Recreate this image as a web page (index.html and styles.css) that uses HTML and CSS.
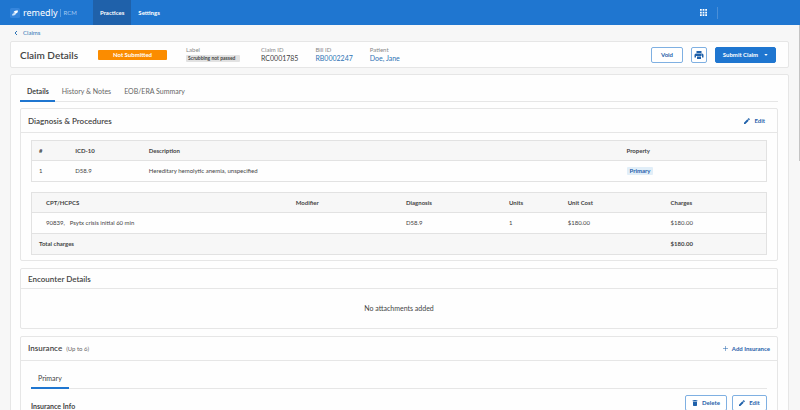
FILE: index.html
```html
<!DOCTYPE html>
<html lang="en">
<head>
    <meta charset="UTF-8">
    <meta name="viewport" content="width=device-width, initial-scale=1.0">
    <title>Claim Details - remedly RCM</title>
    <link rel="stylesheet" href="styles.css">
</head>
<body>
    <header class="topbar">
        <a class="brand" href="#">
            <svg class="brand-mark" viewBox="0 0 20 20">
                <rect width="20" height="20" rx="3" fill="#3585dc"/>
                <path d="M4 15c0-3 2-5 5-5h3c0 3-2 5-5 5z" fill="#c9e2fb"/>
                <path d="M7 9c1-3 3-4 9-4 0 4-2 6-5 6 0-1-2-2-4-2z" fill="#fff"/>
            </svg>
            <span class="brand-name">remedly</span>
            <span class="brand-sub">RCM</span>
        </a>
        <nav class="topnav">
            <a class="active" href="#">Practices</a>
            <a href="#">Settings</a>
        </nav>
        <button class="apps" aria-label="Apps">
            <svg viewBox="0 0 16 16" fill="#fff">
                <path d="M0 0h4v4H0zM6 0h4v4H6zM12 0h4v4h-4zM0 6h4v4H0zM6 6h4v4H6zM12 6h4v4h-4zM0 12h4v4H0zM6 12h4v4H6zM12 12h4v4h-4z"/>
            </svg>
        </button>
    </header>

    <main class="page">
        <a class="back" href="#">
            <svg viewBox="0 0 8 12"><path d="M6 2L2 6l4 4" fill="none" stroke="currentColor" stroke-width="2"/></svg>
            Claims
        </a>

        <!-- Claim summary -->
        <section class="card summary">
            <h1>Claim Details</h1>
            <span class="status">Not Submitted</span>
            <dl class="facts">
                <div class="fact fact-label">
                    <dt>Label</dt>
                    <dd><span class="chip">Scrubbing not passed</span></dd>
                </div>
                <div class="fact">
                    <dt>Claim ID</dt>
                    <dd>RC0001785</dd>
                </div>
                <div class="fact">
                    <dt>Bill ID</dt>
                    <dd><a href="#">RB0002247</a></dd>
                </div>
                <div class="fact">
                    <dt>Patient</dt>
                    <dd><a href="#">Doe, Jane</a></dd>
                </div>
            </dl>
            <div class="actions">
                <button class="btn btn-void">Void</button>
                <button class="btn btn-icon" aria-label="Print">
                    <svg viewBox="0 0 20 20" fill="currentColor">
                        <path d="M5 2h10v4H5zM4 7h12a3 3 0 0 1 3 3v5h-3v-3H4v3H1v-5a3 3 0 0 1 3-3zM6 13h8v5H6z"/>
                        <circle cx="15" cy="10" r="1" fill="#fff"/>
                    </svg>
                </button>
                <button class="btn btn-primary">Submit Claim
                    <svg viewBox="0 0 10 6"><path d="M0 0h10L5 6z" fill="currentColor"/></svg>
                </button>
            </div>
        </section>

        <section class="card content">
            <nav class="tabs">
                <a class="active" href="#">Details</a>
                <a href="#">History &amp; Notes</a>
                <a href="#">EOB/ERA Summary</a>
            </nav>

            <!-- Diagnosis -->
            <section class="panel">
                <div class="panel-head">
                    <h2>Diagnosis &amp; Procedures</h2>
                    <button class="link-btn">
                        <svg viewBox="0 0 18 18" fill="currentColor"><path d="M0 14L10 4l4 4L4 18H0zM11 3l2-2q1-1 2 0l2 2q1 1 0 2l-2 2z"/></svg>
                        Edit
                    </button>
                </div>
                <div class="panel-body">
                    <table class="grid diagnosis">
                        <colgroup><col class="c-num"><col class="c-icd"><col><col class="c-prop"></colgroup>
                        <thead>
                            <tr><th>#</th><th>ICD-10</th><th>Description</th><th>Property</th></tr>
                        </thead>
                        <tbody>
                            <tr>
                                <td>1</td>
                                <td>D58.9</td>
                                <td>Hereditary hemolytic anemia, unspecified</td>
                                <td><span class="tag">Primary</span></td>
                            </tr>
                        </tbody>
                    </table>

                    <table class="grid procedures">
                        <colgroup><col class="c-cpt"><col class="c-mod"><col class="c-diag"><col class="c-units"><col class="c-cost"><col></colgroup>
                        <thead>
                            <tr><th>CPT/HCPCS</th><th>Modifier</th><th>Diagnosis</th><th>Units</th><th>Unit Cost</th><th>Charges</th></tr>
                        </thead>
                        <tbody>
                            <tr>
                                <td><span class="code">90839,</span>Psytx crisis initial 60 min</td>
                                <td></td>
                                <td>D58.9</td>
                                <td>1</td>
                                <td>$180.00</td>
                                <td>$180.00</td>
                            </tr>
                        </tbody>
                        <tfoot>
                            <tr><th colspan="5">Total charges</th><th>$180.00</th></tr>
                        </tfoot>
                    </table>
                </div>
            </section>

            <!-- Encounter -->
            <section class="panel">
                <div class="panel-head panel-head-small">
                    <h2>Encounter Details</h2>
                </div>
                <p class="empty">No attachments added</p>
            </section>

            <!-- Insurance -->
            <section class="panel">
                <div class="panel-head">
                    <h2>Insurance <small>(Up to 6)</small></h2>
                    <button class="link-btn link-btn-add">
                        <svg viewBox="0 0 10 10"><path d="M5 0v10M0 5h10" stroke="currentColor" stroke-width="1"/></svg>
                        Add Insurance
                    </button>
                </div>
                <div class="panel-body">
                    <nav class="tabs tabs-inner">
                        <a class="active" href="#">Primary</a>
                    </nav>
                    <div class="info-row">
                        <h3>Insurance Info</h3>
                        <div class="info-actions">
                            <button class="btn btn-delete">
                                <svg viewBox="0 0 14 18" fill="currentColor"><path d="M0 1h4l1-1h4l1 1h4v3H0zM1 5h12v11q0 2-2 2H3q-2 0-2-2z"/></svg>
                                Delete
                            </button>
                            <button class="btn btn-edit">
                                <svg viewBox="0 0 18 18" fill="currentColor"><path d="M0 14L10 4l4 4L4 18H0zM11 3l2-2q1-1 2 0l2 2q1 1 0 2l-2 2z"/></svg>
                                Edit
                            </button>
                        </div>
                    </div>
                </div>
            </section>
        </section>
    </main>
    <div class="scroll-thumb"></div>
</body>
</html>
```
FILE: styles.css
```css
:root {
    --blue: #1f76d0;
    --blue-dark: #1f61aa;
    --link: #2f74b5;
    --text: #444;
    --muted: #888;
    --line: #e6e6e6;
}

* {
    box-sizing: border-box;
}

body {
    margin: 0;
    height: 100vh;
    overflow: hidden;
    background: #f7f7f7;
    color: var(--text);
    font-family: Lato, "Liberation Sans", sans-serif;
    font-size: 6px;
    line-height: 8px;
}

h1, h2, h3, p, dl, dd {
    margin: 0;
}

a {
    color: var(--link);
    text-decoration: none;
}

button {
    font: inherit;
    padding: 0;
    border: none;
    background: none;
    cursor: pointer;
}

svg {
    display: block;
    flex: none;
}

/* Top bar */
.topbar {
    display: flex;
    align-items: stretch;
    height: 25px;
    background: var(--blue);
}

.brand {
    display: flex;
    align-items: center;
    width: 93px;
    padding-left: 10px;
    color: #fff;
}

.brand-mark {
    width: 10px;
    height: 10px;
    margin-right: 3px;
}

.brand-name {
    font-family: "Noto Sans", sans-serif;
    font-size: 9px;
    line-height: 12px;
}

.brand-sub {
    margin-left: 2px;
    padding-left: 3px;
    border-left: 1px solid #5b9de0;
    color: #a5caf0;
}

.topnav {
    display: flex;
    flex: 1;
}

.topnav a {
    display: flex;
    align-items: center;
    padding: 0 7px;
    color: #fff;
    font-weight: 700;
}

.topnav .active {
    background: var(--blue-dark);
}

.apps {
    align-self: center;
    height: 12px;
    margin-right: 82px;
    padding-right: 10px;
    border-right: 1px solid #4a8fd8;
}

.apps svg {
    width: 7px;
    height: 7px;
}

/* Page */
.page {
    padding: 4px 11px 0 10px;
}

.back {
    display: flex;
    align-items: center;
    gap: 5px;
    padding-left: 4px;
}

.back svg {
    width: 4px;
    height: 6px;
}

.card {
    background: #fefefe;
    border: 1px solid var(--line);
    border-radius: 2px;
}

.summary {
    display: flex;
    align-items: center;
    height: 27px;
    margin-top: 4px;
    padding: 0 12px 0 9px;
}

.summary h1 {
    width: 78px;
    font-size: 10px;
    line-height: 12px;
    font-weight: 600;
}

.status {
    width: 69px;
    background: #fb8c00;
    border-radius: 1px;
    color: #fff;
    font-weight: 700;
    line-height: 10px;
    text-align: center;
}

.facts {
    display: flex;
    flex: 1;
    gap: 17px;
    margin-left: 19px;
    padding-bottom: 2px;
}

.fact {
    font-size: 7px;
}

.fact-label {
    width: 58px;
}

.fact dt {
    color: var(--muted);
    font-size: 6px;
}

.chip {
    display: block;
    width: 54px;
    margin-top: 1px;
    padding: 0 2px;
    background: #e2e2e2;
    border-radius: 1px;
    font-size: 5px;
    font-weight: 700;
    line-height: 7px;
    white-space: nowrap;
}

.actions {
    display: flex;
    gap: 8px;
}

.btn {
    display: flex;
    align-items: center;
    justify-content: center;
    gap: 4px;
    height: 16px;
    border: 1px solid #7fb0e2;
    border-radius: 2px;
    background: #fff;
    color: var(--blue-dark);
    font-weight: 700;
}

.btn svg {
    width: 6px;
    height: 6px;
}

.btn-void {
    width: 32px;
}

.btn-icon {
    width: 16px;
}

.btn-icon svg {
    width: 10px;
    height: 10px;
}

.btn-primary {
    gap: 6px;
    width: 61px;
    background: var(--blue);
    border-color: var(--blue);
    color: #fff;
}

.btn-primary svg {
    width: 4px;
    height: 2px;
}

.content {
    margin-top: 6px;
    padding: 7px 10px 7px 9px;
}

/* Tabs */
.tabs {
    display: flex;
    border-bottom: 1px solid var(--line);
    font-size: 7px;
}

.tabs a {
    padding: 5px 6px 5px 7px;
    border-bottom: 2px solid transparent;
    margin-bottom: -1px;
    color: #666;
}

.tabs .active {
    border-color: var(--blue);
    color: var(--text);
    font-weight: 700;
}

/* Panels */
.panel {
    margin-top: 7px;
    border: 1px solid var(--line);
    border-radius: 2px;
}

.tabs + .panel {
    margin-top: 6px;
}

.panel-head {
    display: flex;
    align-items: center;
    justify-content: space-between;
    height: 24px;
    padding: 0 7px;
    border-bottom: 1px solid var(--line);
}

.panel-head-small {
    height: 20px;
}

.panel-head h2 {
    font-size: 8px;
    font-weight: 600;
}

.panel-head small {
    margin-left: 2px;
    color: #666;
    font-size: 6px;
    font-weight: 400;
}

.link-btn {
    display: flex;
    align-items: center;
    gap: 4px;
    margin-right: 5px;
    color: var(--blue-dark);
    font-weight: 700;
}

.link-btn svg {
    width: 6px;
    height: 6px;
}

.link-btn-add {
    margin-right: 0;
}

.link-btn-add svg {
    width: 5px;
    height: 5px;
}

.panel-body {
    padding: 7px 10px 5px;
}

/* Tables */
.grid {
    width: 100%;
    table-layout: fixed;
    border-collapse: collapse;
    border: 1px solid #e2e2e2;
}

.grid + .grid {
    margin-top: 10px;
}

.grid tr {
    height: 21px;
    border-bottom: 1px solid #e2e2e2;
}

.grid thead tr {
    height: 20px;
}

.grid th,
.grid td {
    padding: 0 7px;
    text-align: left;
}

.grid thead,
.grid tfoot {
    background: #f7f7f7;
}

.c-num { width: 5%; }
.c-icd { width: 10%; }
.c-prop { width: 20%; }

.procedures tr > :first-child {
    padding-left: 14px;
}

.procedures tfoot tr > :first-child {
    padding-left: 7px;
}

.c-cpt { width: 35%; }
.c-mod { width: 15%; }
.c-diag { width: 14%; }
.c-units { width: 8%; }
.c-cost { width: 14%; }

.code {
    margin-right: 5px;
}

.tag {
    display: inline-block;
    padding: 0 3px;
    background: #e1eef8;
    border-radius: 1px;
    color: var(--blue-dark);
    font-weight: 700;
}

.empty {
    padding: 15px 0 16px;
    font-size: 7px;
    text-align: center;
}

/* Insurance */
.tabs-inner a {
    padding: 6px 7px 5px;
}

.tabs-inner .active {
    font-weight: 400;
}

.info-row {
    display: flex;
    justify-content: space-between;
    margin-top: 6px;
}

.info-row h3 {
    margin-top: 7px;
    font-size: 7px;
}

.info-actions {
    display: flex;
    gap: 5px;
}

.btn-delete {
    width: 42px;
}

.btn-edit {
    width: 35px;
}

.scroll-thumb {
    position: absolute;
    top: 25px;
    right: 0;
    width: 1px;
    height: 136px;
    background: #c4c4c4;
}
```
